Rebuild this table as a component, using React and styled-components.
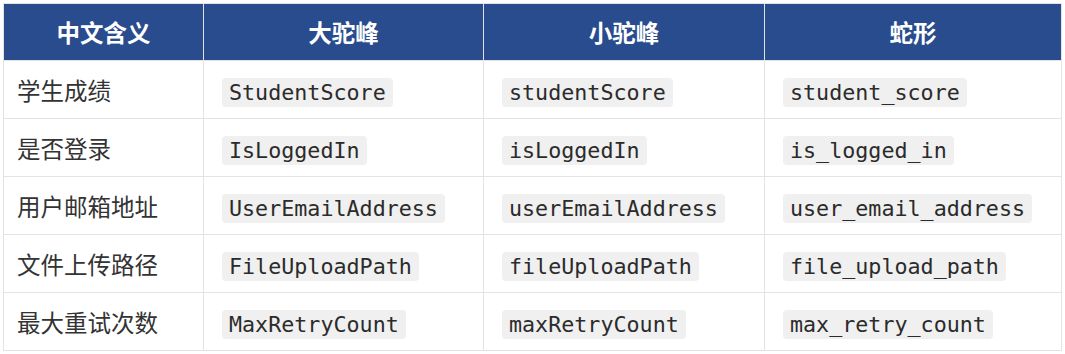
import React from 'react';
import styled, {createGlobalStyle} from 'styled-components';

const GlobalStyle = createGlobalStyle`
	html, body {
		margin: 0;
		padding: 0;
		background: #ffffff;
	}
	body {
		padding: 3px 4px 0 3px;
		font-family: 'Noto Sans CJK SC', 'Noto Sans', sans-serif;
	}
`;

const Table = styled.table`
	width: 1058px;
	border-collapse: collapse;
	table-layout: fixed;
	border: 1px solid #e3e3e3;
`;

const HeadCell = styled.th`
	height: 56px;
	padding: 0 16px;
	background-color: #294c8e;
	border: 1px solid #e3e3e3;
	color: #ffffff;
	font-size: 23.5px;
	font-weight: 700;
	text-align: center;
	vertical-align: middle;
`;

const Cell = styled.td`
	height: 57px;
	padding: 0 15px 0 ${(props) => (props.$label ? '13px' : '18px')};
	border: 1px solid #e3e3e3;
	color: #333333;
	font-size: 23.5px;
	vertical-align: middle;
	text-align: left;
`;

const Code = styled.code`
	display: inline-block;
	padding: 2px 7px;
	border-radius: 4px;
	background-color: #f0f0f0;
	color: #2b2b2b;
	font-family: 'DejaVu Sans Mono', 'Liberation Mono', monospace;
	font-size: 21.7px;
	line-height: 25px;
`;

const columns = [
	{title: '中文含义', width: 200},
	{title: '大驼峰', width: 280},
	{title: '小驼峰', width: 281},
	{title: '蛇形', width: 297},
];

const rows = [
	['学生成绩', 'StudentScore', 'studentScore', 'student_score'],
	['是否登录', 'IsLoggedIn', 'isLoggedIn', 'is_logged_in'],
	['用户邮箱地址', 'UserEmailAddress', 'userEmailAddress', 'user_email_address'],
	['文件上传路径', 'FileUploadPath', 'fileUploadPath', 'file_upload_path'],
	['最大重试次数', 'MaxRetryCount', 'maxRetryCount', 'max_retry_count'],
];

const App = () => (
	<>
		<GlobalStyle />
		<Table>
			<colgroup>
				{columns.map((col) => (
					<col key={col.title} style={{width: col.width}} />
				))}
			</colgroup>
			<thead>
				<tr>
					{columns.map((col) => (
						<HeadCell key={col.title}>{col.title}</HeadCell>
					))}
				</tr>
			</thead>
			<tbody>
				{rows.map(([meaning, ...names]) => (
					<tr key={meaning}>
						<Cell $label>{meaning}</Cell>
						{names.map((name) => (
							<Cell key={name}>
								<Code>{name}</Code>
							</Cell>
						))}
					</tr>
				))}
			</tbody>
		</Table>
	</>
);

export default App;
